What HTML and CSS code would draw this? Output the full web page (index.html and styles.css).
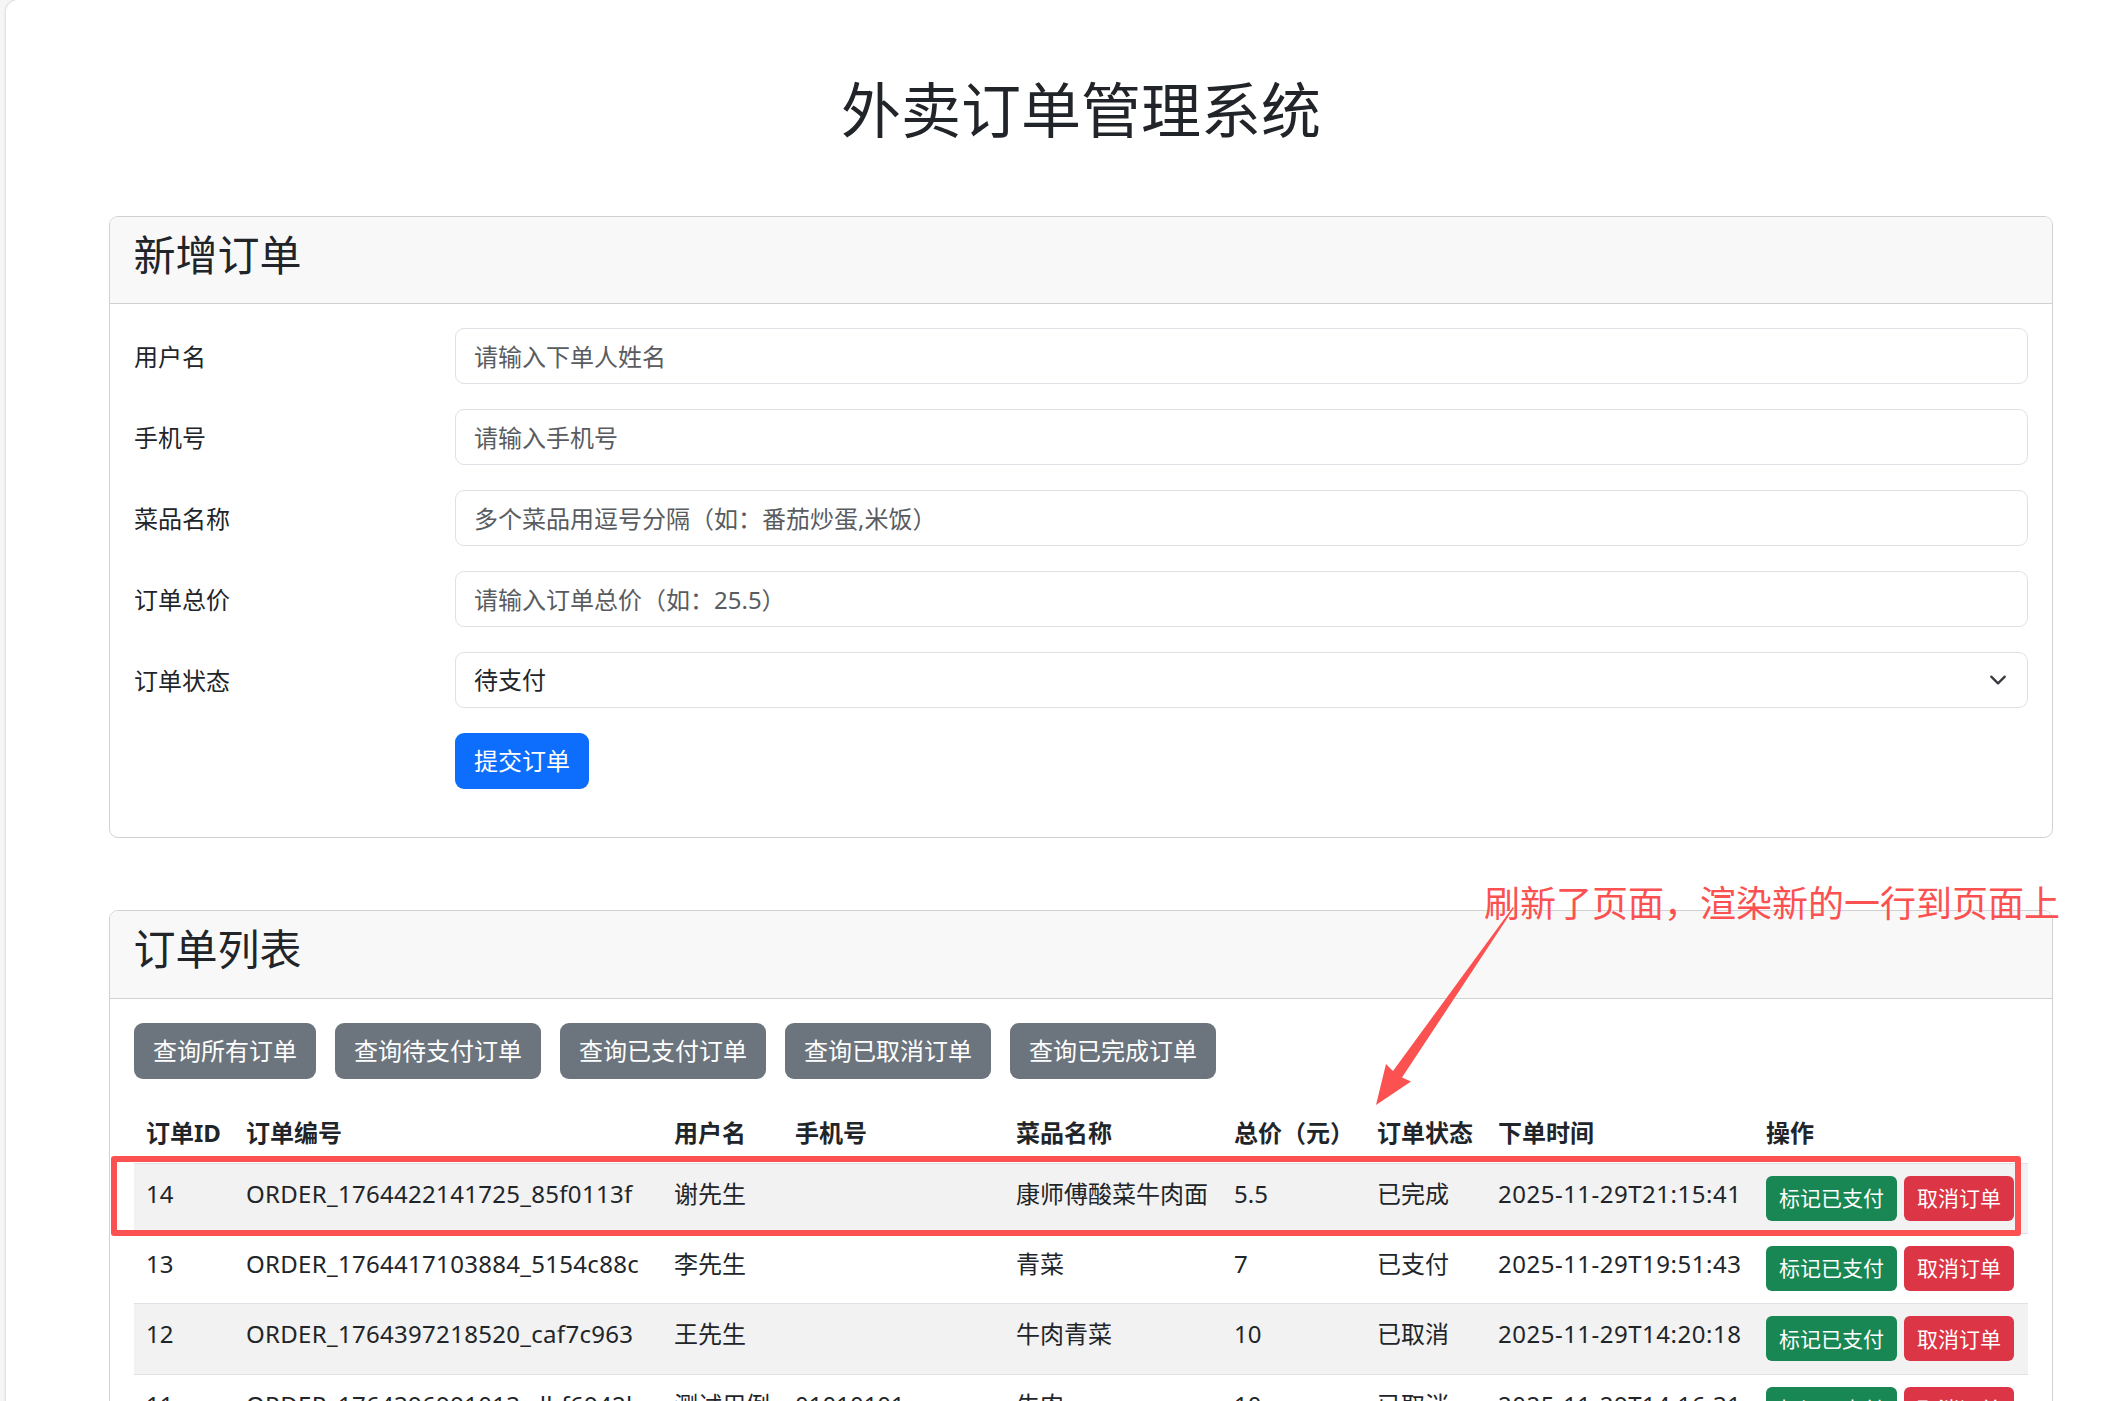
FILE: index.html
```html
<!DOCTYPE html>
<html lang="zh-CN">
<head>
    <meta charset="UTF-8">
    <title>外卖订单管理系统</title>
    <link rel="stylesheet" href="styles.css">
</head>
<body>
    <div class="container">
        <h1>外卖订单管理系统</h1>

        <!-- 新增订单 -->
        <div class="card">
            <div class="card-header">
                <h3>新增订单</h3>
            </div>
            <div class="card-body">
                <form id="orderForm">
                    <div class="form-row">
                        <label for="username">用户名</label>
                        <input type="text" class="form-control" id="username" placeholder="请输入下单人姓名">
                    </div>
                    <div class="form-row">
                        <label for="phone">手机号</label>
                        <input type="text" class="form-control" id="phone" placeholder="请输入手机号">
                    </div>
                    <div class="form-row">
                        <label for="dishes">菜品名称</label>
                        <input type="text" class="form-control" id="dishes" placeholder="多个菜品用逗号分隔（如：番茄炒蛋,米饭）">
                    </div>
                    <div class="form-row">
                        <label for="price">订单总价</label>
                        <input type="text" class="form-control" id="price" placeholder="请输入订单总价（如：25.5）">
                    </div>
                    <div class="form-row">
                        <label for="status">订单状态</label>
                        <div class="select-wrap">
                            <select class="form-control" id="status">
                                <option>待支付</option>
                                <option>已支付</option>
                                <option>已取消</option>
                                <option>已完成</option>
                            </select>
                            <svg class="select-arrow" viewBox="0 0 16 16"><path d="m2 5 6 6 6-6"/></svg>
                        </div>
                    </div>
                    <div class="form-row form-submit">
                        <button type="button" class="btn btn-primary">提交订单</button>
                    </div>
                </form>
            </div>
        </div>

        <!-- 订单列表 -->
        <div class="card">
            <div class="card-header">
                <h3>订单列表</h3>
            </div>
            <div class="card-body">
                <div class="filters">
                    <button class="btn btn-secondary">查询所有订单</button>
                    <button class="btn btn-secondary">查询待支付订单</button>
                    <button class="btn btn-secondary">查询已支付订单</button>
                    <button class="btn btn-secondary">查询已取消订单</button>
                    <button class="btn btn-secondary">查询已完成订单</button>
                </div>
                <table class="order-table">
                    <colgroup>
                        <col class="col-id">
                        <col class="col-no">
                        <col class="col-user">
                        <col class="col-phone">
                        <col class="col-dish">
                        <col class="col-price">
                        <col class="col-status">
                        <col class="col-time">
                        <col class="col-action">
                    </colgroup>
                    <thead>
                        <tr>
                            <th>订单ID</th>
                            <th>订单编号</th>
                            <th>用户名</th>
                            <th>手机号</th>
                            <th>菜品名称</th>
                            <th>总价（元）</th>
                            <th>订单状态</th>
                            <th>下单时间</th>
                            <th>操作</th>
                        </tr>
                    </thead>
                    <tbody>
                        <tr>
                            <td>14</td>
                            <td class="order-no">ORDER_1764422141725_85f0113f</td>
                            <td>谢先生</td>
                            <td></td>
                            <td>康师傅酸菜牛肉面</td>
                            <td>5.5</td>
                            <td>已完成</td>
                            <td class="order-time">2025-11-29T21:15:41</td>
                            <td>
                                <div class="actions">
                                    <button class="btn-sm btn-success">标记已支付</button>
                                    <button class="btn-sm btn-danger">取消订单</button>
                                </div>
                            </td>
                        </tr>
                        <tr>
                            <td>13</td>
                            <td class="order-no">ORDER_1764417103884_5154c88c</td>
                            <td>李先生</td>
                            <td></td>
                            <td>青菜</td>
                            <td>7</td>
                            <td>已支付</td>
                            <td class="order-time">2025-11-29T19:51:43</td>
                            <td>
                                <div class="actions">
                                    <button class="btn-sm btn-success">标记已支付</button>
                                    <button class="btn-sm btn-danger">取消订单</button>
                                </div>
                            </td>
                        </tr>
                        <tr>
                            <td>12</td>
                            <td class="order-no">ORDER_1764397218520_caf7c963</td>
                            <td>王先生</td>
                            <td></td>
                            <td>牛肉青菜</td>
                            <td>10</td>
                            <td>已取消</td>
                            <td class="order-time">2025-11-29T14:20:18</td>
                            <td>
                                <div class="actions">
                                    <button class="btn-sm btn-success">标记已支付</button>
                                    <button class="btn-sm btn-danger">取消订单</button>
                                </div>
                            </td>
                        </tr>
                        <tr>
                            <td>11</td>
                            <td class="order-no">ORDER_1764396991013_dbf6942b</td>
                            <td>测试用例</td>
                            <td>01010101</td>
                            <td>牛肉</td>
                            <td>10</td>
                            <td>已取消</td>
                            <td class="order-time">2025-11-29T14:16:31</td>
                            <td>
                                <div class="actions">
                                    <button class="btn-sm btn-success">标记已支付</button>
                                    <button class="btn-sm btn-danger">取消订单</button>
                                </div>
                            </td>
                        </tr>
                    </tbody>
                </table>
            </div>
        </div>
    </div>

    <!-- 标注 -->
    <div class="note-box"></div>
    <svg class="note-arrow" viewBox="0 0 140 202"><path d="M138 2 L18 166 L11 159 L1 200 L36 176.500 L27 172.500 L139 3 Z"/></svg>
    <div class="note-text">刷新了页面，渲染新的一行到页面上</div>
</body>
</html>
```

FILE: styles.css
```css
:root {
    --text: #212529;
    --border: #dee2e6;
    --note: #fc5151;
}

* {
    margin: 0;
    padding: 0;
    box-sizing: border-box;
}

body {
    position: relative;
    height: 1401px;
    overflow: hidden;
    background: #f5f5f5;
    color: var(--text);
    font-family: "Noto Sans", "Noto Sans CJK SC", sans-serif;
    font-size: 24px;
    line-height: 36px;
}

.container {
    min-height: 1401px;
    margin-left: 6px;
    padding: 72px 62px 0 103px;
    background: #fff;
    border-top-left-radius: 12px;
    box-shadow: 0 0 3px rgba(0, 0, 0, 0.2);
}

h1 {
    height: 72px;
    margin-bottom: 72px;
    font-size: 60px;
    font-weight: 400;
    line-height: 76px;
    text-align: center;
}

.card {
    margin-bottom: 72px;
    border: 1px solid #d0d1d2;
    border-radius: 9px;
    background: #fff;
}

.card-header {
    height: 87.4px;
    padding: 12px 23.5px;
    background: #f8f8f8;
    border-bottom: 1px solid #d0d1d2;
    border-radius: 8px 8px 0 0;
}

.card-header h3 {
    font-size: 42px;
    font-weight: 400;
    line-height: 52px;
}

.card-body {
    padding: 24px;
}

.form-row {
    display: grid;
    grid-template-columns: 321px 1fr;
    height: 57px;
    margin-bottom: 24px;
    align-items: start;
}

.form-submit {
    height: 55.9px;
}

.form-row label {
    padding-top: 11px;
}

.form-control {
    display: block;
    width: 100%;
    height: 56px;
    padding: 9px 18px;
    border: 1px solid var(--border);
    border-radius: 9px;
    background: #fff;
    color: var(--text);
    font: inherit;
    appearance: none;
}

.form-control::placeholder {
    color: #595c5f;
    opacity: 1;
}

.select-wrap {
    position: relative;
}

.select-arrow {
    position: absolute;
    top: 19px;
    right: 21px;
    width: 18px;
    height: 18px;
    fill: none;
    stroke: #343a40;
    stroke-width: 2;
    stroke-linecap: round;
    stroke-linejoin: round;
}

.btn {
    height: 56px;
    padding: 0 19px;
    border: none;
    border-radius: 9px;
    color: #fff;
    font: inherit;
    white-space: nowrap;
}

.btn-primary {
    grid-column: 2;
    justify-self: start;
    background: #0d6efd;
}

.btn-secondary {
    background: #6c757d;
}

.filters {
    display: flex;
    gap: 19px;
    margin-bottom: 24px;
}

.order-table {
    width: 100%;
    table-layout: fixed;
    border-collapse: collapse;
}

.col-id { width: 100px; }
.col-no { width: 428px; }
.col-user { width: 121px; }
.col-phone { width: 221px; }
.col-dish { width: 218px; }
.col-price { width: 143px; }
.col-status { width: 121px; }
.col-time { width: 268px; }

.order-table th,
.order-table td {
    padding: 12px;
    text-align: left;
    vertical-align: top;
    white-space: nowrap;
    border-bottom: 1px solid var(--border);
}

.order-table td {
    height: 70.3px;
}

.order-table .order-no {
    letter-spacing: 0.3px;
}

.order-table .order-time {
    letter-spacing: 0.5px;
}

.order-table tbody tr:nth-child(odd) {
    background: #f2f2f2;
}

.actions {
    display: flex;
    gap: 7px;
}

.btn-sm {
    height: 45px;
    padding: 0 13px 2px;
    border: none;
    border-radius: 6px;
    color: #fff;
    font-family: inherit;
    font-size: 21px;
    white-space: nowrap;
}

.btn-success {
    background: #198754;
}

.btn-danger {
    background: #dc3545;
}

.note-box {
    position: absolute;
    left: 111px;
    top: 1156px;
    width: 1910px;
    height: 80px;
    border: 6px solid var(--note);
    border-radius: 3px;
}

.note-arrow {
    position: absolute;
    left: 1375px;
    top: 905px;
    width: 140px;
    height: 202px;
    fill: var(--note);
}

.note-text {
    position: absolute;
    left: 1484px;
    top: 880px;
    color: var(--note);
    font-size: 36px;
    line-height: 48px;
    white-space: nowrap;
}
```
